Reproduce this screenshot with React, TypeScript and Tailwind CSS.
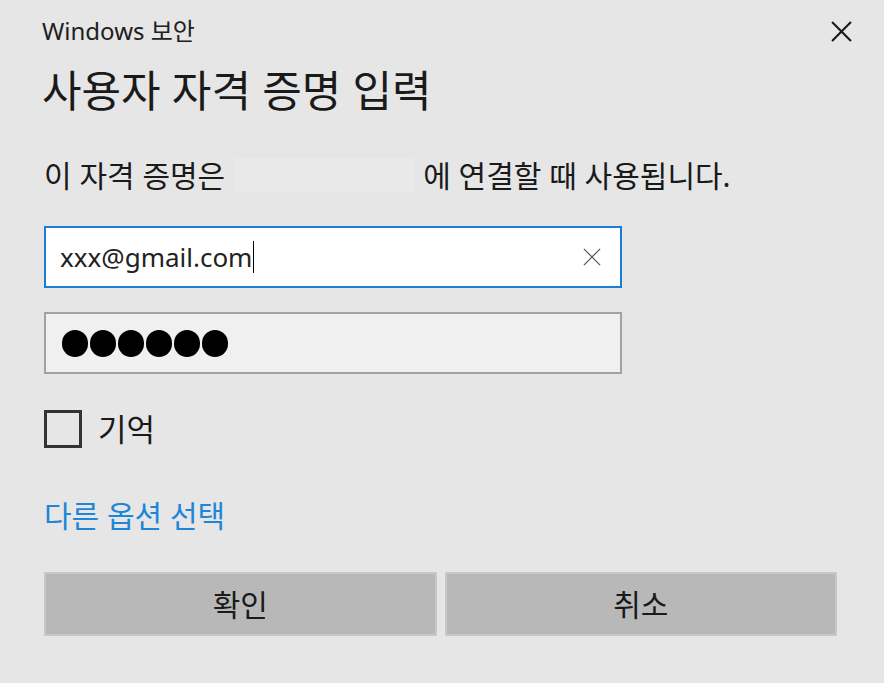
import { useState } from 'react'

const font = { fontFamily: '"Noto Sans", "Noto Sans CJK KR", sans-serif' }

function CloseIcon({ size, stroke, color }: { size: number; stroke: number; color: string }) {
	return (
		<svg width={size} height={size} viewBox="0 0 20 20" fill="none">
			<path d="M1 1L19 19M19 1L1 19" stroke={color} strokeWidth={stroke} />
		</svg>
	)
}

export default function App() {
	const [remember, setRemember] = useState(false)

	return (
		<div
			className="w-[884px] h-[683px] bg-[#e6e6e6] text-[#1a1a1a] flex flex-col pl-[44px] pt-[16px] overflow-hidden"
			style={font}
		>
			<div className="h-[30px] flex items-center justify-between pr-[32px]">
				<span className="text-[24px] -ml-[2px] text-[#202020]">Windows 보안</span>
				<CloseIcon size={21} stroke={2} color="#1a1a1a" />
			</div>

			<div className="h-[46px] mt-[22px] flex items-center -ml-[2px] text-[43px]">사용자 자격 증명 입력</div>

			<div className="h-[36px] mt-[43px] flex items-center text-[30px]">
				<span>이 자격 증명은</span>
				<div className="w-[180px] h-[34px] ml-[10px] mr-[8px] bg-[#e9e9e9]" />
				<span>에 연결할 때 사용됩니다.</span>
			</div>

			<div className="mt-[33px] w-[578px] h-[62px] border-2 border-[#1a7fd4] bg-white flex items-center pl-[14px] pr-[19px]">
				<span className="text-[26px] text-[#222]">xxx@gmail.com</span>
				<div className="w-px h-[32px] bg-black ml-[1px]" />
				<div className="flex-1" />
				<CloseIcon size={18} stroke={1.4} color="#5a5a5a" />
			</div>

			<div className="mt-[24px] w-[578px] h-[62px] border-2 border-[#a2a2a2] bg-[#f0f0f0] flex items-center pl-[16px] gap-[2px]">
				{[0, 1, 2, 3, 4, 5].map(i => (
					<div key={i} className="w-[26px] h-[27px] rounded-full bg-black" />
				))}
			</div>

			<div className="mt-[36px] h-[38px] flex items-center">
				<button
					onClick={() => setRemember(!remember)}
					className="w-[38px] h-[38px] border-[3px] border-[#333] bg-transparent"
				/>
				<span className="ml-[16px] text-[31px]">기억</span>
			</div>

			<div className="mt-[49px] h-[36px] flex items-center text-[30px] text-[#1e86d8]">다른 옵션 선택</div>

			<div className="mt-[39px] w-[793px] flex gap-[8px]">
				<button className="flex-1 h-[64px] bg-[#b8b8b8] border-2 border-[#c8c8c8] text-[30px] text-[#1a1a1a]">확인</button>
				<button className="flex-1 h-[64px] bg-[#b8b8b8] border-2 border-[#c8c8c8] text-[30px] text-[#1a1a1a]">취소</button>
			</div>
		</div>
	)
}
